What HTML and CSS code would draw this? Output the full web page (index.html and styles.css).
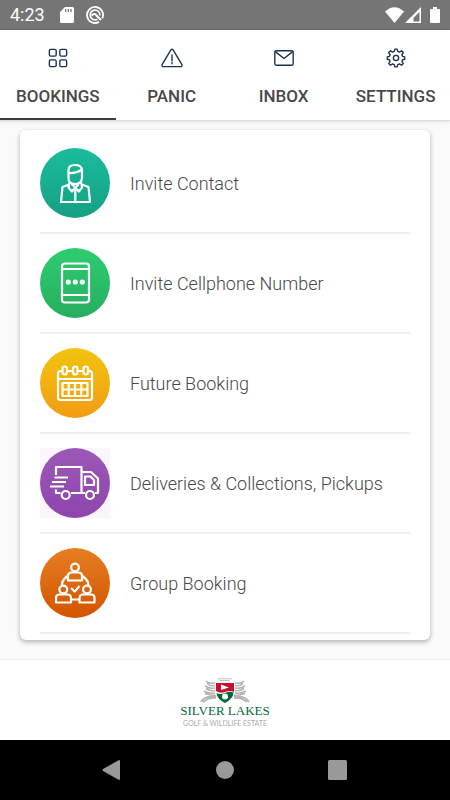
FILE: index.html
```html
<!DOCTYPE html>
<html lang="en">
<head>
    <meta charset="UTF-8">
    <meta name="viewport" content="width=device-width, initial-scale=1.0">
    <title>Silver Lakes Bookings</title>
    <link rel="stylesheet" href="styles.css">
</head>
<body>
    <!-- Device status bar -->
    <div class="status-bar">
        <div class="status-left">
            <span class="status-time">4:23</span>
            <svg width="14" height="16" viewBox="0 0 14 16"><path fill="#fff" fill-rule="evenodd" d="M5 0h7.500q1.500 0 1.500 1.500v13q0 1.500-1.500 1.500h-11Q0 16 0 14.500V5zM5 2v3h1.300V2zm2.700 0v3H9V2zm2.600 0v3h1.300V2z"/></svg>
            <svg width="18" height="18" viewBox="0 0 18 18" fill="none" stroke="#fff"><path stroke-width="1.800" d="M13 15.900A8 8 0 1 1 16.300 12.300"/><path stroke-width="1.600" d="M11.500 13.200A4.900 4.900 0 1 1 13.900 9.500"/><path stroke-width="2" d="M5.500 9.500Q8.500 6.500 10.500 9.500L15 14"/></svg>
        </div>
        <div class="status-right">
            <svg width="19" height="16" viewBox="0 0 19 16"><path fill="#fff" d="M0 4.500Q9.500-4 19 4.500L9.500 16z"/></svg>
            <svg width="16" height="16" viewBox="0 0 16 16"><path fill="#fff" fill-rule="evenodd" d="M16 0v16H0zM14.500 5L8.500 11v3.500h6z"/></svg>
            <svg class="battery-icon" width="10" height="16" viewBox="0 0 10 16"><path fill="#fff" d="M3 0h4v2h2q1 0 1 1v12q0 1-1 1H1q-1 0-1-1V3q0-1 1-1h2z"/></svg>
        </div>
    </div>

    <nav class="tabs">
        <button class="tab active">
            <svg class="tab-icon" viewBox="0 0 22 22"><rect x="1.500" y="1.500" width="7.500" height="7.500" rx="1.500"/><rect x="13" y="1.500" width="7.500" height="7.500" rx="1.500"/><rect x="1.500" y="13" width="7.500" height="7.500" rx="1.500"/><rect x="13" y="13" width="7.500" height="7.500" rx="1.500"/></svg>
            <span>BOOKINGS</span>
        </button>
        <button class="tab">
            <svg class="tab-icon" viewBox="0 0 22 22"><path d="M9.800 2L.2 18Q-.8 20.500 1.800 20.500h18.400q2.600 0 1.600-2.500L12.200 2Q11 .4 9.800 2zM11 7.500V14M11 16v1.300"/></svg>
            <span>PANIC</span>
        </button>
        <button class="tab">
            <svg class="tab-icon" viewBox="0 0 22 22"><rect x=".9" y="3" width="20.200" height="16" rx="1.700"/><path d="M1.500 4l9.500 7.500L20.500 4"/></svg>
            <span>INBOX</span>
        </button>
        <button class="tab">
            <svg class="tab-icon" viewBox="0 0 22 22"><path d="M9.700 1.200h2.600l.6 2.600 1.900.8 2.300-1.500L19 5l-1.500 2.300.8 1.900 2.300.5v2.700l-2.300.5-.8 1.900L19 17.100 17.100 19l-2.300-1.500-1.900.8-.6 2.500H9.700l-.6-2.500-1.900-.8L4.900 19 3 17.100l1.500-2.300-.8-1.900-2.300-.5V9.700l2.300-.5.8-1.900L3 5l1.900-1.900 2.300 1.500 1.900-.8z"/><circle cx="11" cy="11" r="2.900"/></svg>
            <span>SETTINGS</span>
        </button>
    </nav>

    <main class="content">
        <div class="card">
            <a href="#" class="menu-row">
                <span class="menu-icon teal">
                    <svg viewBox="0 0 70 70"><path d="M28.500 24v-2q0-5 6.500-5t7 5v7q0 7-7 7t-6.500-7zM28.500 25q8 .5 13.500-3.500M29 36.500l-6.500 2.500-1.500 15h29l-1.500-15-6.500-2.500M29.500 34.500l-1 5 3.500 4 3.300-4 3.500 4 3.300-4-1-5M35.300 39.500V54M31.500 36l3.800 3.500 3.700-3.500"/></svg>
                </span>
                <span>Invite Contact</span>
            </a>
            <a href="#" class="menu-row">
                <span class="menu-icon green">
                    <svg viewBox="0 0 70 70"><rect x="22" y="15.500" width="27" height="39" rx="3"/><path d="M22 21h27M22 47h27"/><g fill="#fff" stroke="none"><circle cx="28.300" cy="34" r="2.600"/><circle cx="35.300" cy="34" r="2.600"/><circle cx="42.300" cy="34" r="2.600"/></g></svg>
                </span>
                <span>Invite Cellphone Number</span>
            </a>
            <a href="#" class="menu-row">
                <span class="menu-icon yellow">
                    <svg viewBox="0 0 70 70"><path d="M22 23h-1.500q-2.500 0-2.500 2.500v24q0 2.500 2.500 2.500h29q2.500 0 2.500-2.500v-24q0-2.500-2.500-2.500H48M27 23h6M38 23h5M18 31h34"/><rect x="22.500" y="18.500" width="4.500" height="8" rx="2.200"/><rect x="33" y="18.500" width="4.500" height="8" rx="2.200"/><rect x="43.500" y="18.500" width="4.500" height="8" rx="2.200"/><path d="M22.500 35h25v13h-25zM22.500 41.500h25M28.700 35v13M35 35v13M41.300 35v13"/></svg>
                </span>
                <span>Future Booking</span>
            </a>
            <a href="#" class="menu-row">
                <span class="menu-icon-tint">
                    <span class="menu-icon purple">
                        <svg viewBox="0 0 70 70"><path d="M16 27v-8h25.500v26H31M16 41.500V45h4.500M41.500 24H51l7 6.500V45h-3M41.500 45H45M14.500 29.500H28M12 34h14M10 38.500h14M45 28.500h5.500l3.500 3.500v5h-9z"/><circle cx="25.700" cy="47" r="4"/><circle cx="50" cy="47" r="4"/></svg>
                    </span>
                </span>
                <span>Deliveries &amp; Collections, Pickups</span>
            </a>
            <a href="#" class="menu-row">
                <span class="menu-icon orange">
                    <svg viewBox="0 0 70 70"><circle cx="35" cy="19.500" r="3.900"/><path d="M28 32.500V28q0-3.500 3.500-3.500h7Q42 24.500 42 28v4.500z"/><circle cx="23.300" cy="41.500" r="3.900"/><path d="M16 54.500V50q0-3.500 3.500-3.500h8q3.500 0 3.500 3.500v4.500z"/><circle cx="47" cy="41.500" r="3.900"/><path d="M39.500 54.500V50q0-3.500 3.500-3.500h8q3.500 0 3.500 3.500v4.500zM27.500 28Q22 32 22 37M42.500 28q5.500 4 6 9M31 51.500h8.500M31 40l3.700 3.500 4.800-5.500"/></svg>
                </span>
                <span>Group Booking</span>
            </a>
        </div>
    </main>

    <footer class="footer">
        <svg class="crest" width="50" height="26" viewBox="0 0 50 26">
            <g fill="none" stroke="#b4b4b4" stroke-width="1.700">
                <path d="M18 .8h14M20 2.500h10" stroke-width="1" stroke-dasharray="2 .5"/>
                <path id="plume" d="M6 3q3 3 9 2M7 5.500q3 3 8 2M5 8q4 3 10 2M6 10.500q4 3 9 2M4 13q5 3 11 2M5 15.500q5 2 11 2M1 24q4-7 15-5M3 24q6-5 13-4"/>
                <use href="#plume" transform="matrix(-1 0 0 1 50 0)"/>
            </g>
            <path fill="#c8102e" d="M16 5h18v9q-4-2-9 0t-9-1z"/>
            <path fill="#00693c" d="M16.500 15q4 2 8.500 0t8.500-.5Q33 21 25 25q-8-4-8.500-10z"/>
            <path fill="#fff" d="M21 6.500l8 3-8 2.500z"/>
            <circle cx="25" cy="18.500" r="3" fill="#fff"/>
        </svg>
        <div class="logo-name">SILVER LAKES</div>
        <div class="logo-tagline">GOLF &amp; WILDLIFE ESTATE</div>
    </footer>

    <!-- Device navigation -->
    <div class="device-nav">
        <button class="device-button" aria-label="Back"><svg width="20" height="20" viewBox="0 0 20 20"><path d="M17 0q1 0 1 1v18q0 1-1 1L1 11q-1-1 0-2z"/></svg></button>
        <button class="device-button" aria-label="Home"><svg width="20" height="20" viewBox="0 0 20 20"><circle cx="10" cy="10" r="9"/></svg></button>
        <button class="device-button" aria-label="Overview"><svg width="20" height="20" viewBox="0 0 20 20"><rect width="19" height="20" rx="1.500"/></svg></button>
    </div>
</body>
</html>
```
FILE: styles.css
```css
* {
    box-sizing: border-box;
    margin: 0;
    padding: 0;
}

body {
    font-family: Roboto, sans-serif;
    display: flex;
    flex-direction: column;
    min-height: 100vh;
    background-color: #fafafa;
}

svg {
    display: block;
}

button {
    font-family: inherit;
    border: none;
    background: none;
    cursor: pointer;
}

.status-bar {
    display: flex;
    justify-content: space-between;
    align-items: center;
    height: 30px;
    padding: 0 10px;
    background: #757575;
    border-bottom: 1px solid #686868;
    color: white;
}

.status-left {
    display: flex;
    align-items: center;
}

.status-time {
    font-size: 18px;
    margin-right: 15px;
}

.status-left svg + svg {
    margin-left: 12px;
}

.status-right {
    display: flex;
    align-items: center;
    gap: 1px;
}

.battery-icon {
    margin-left: 8px;
}

.tabs {
    display: flex;
    height: 91px;
    background: white;
    overflow: hidden;
    border-bottom: 1px solid #ddd;
    box-shadow: 0 1px 3px rgba(0,0,0,0.1);
}

.tab {
    flex: none;
    min-width: 112px;
    padding: 18px 16px 0;
    display: flex;
    flex-direction: column;
    align-items: center;
    gap: 18px;
    font-size: 17px;
    line-height: 20px;
    font-weight: 500;
    color: #484848;
    border-bottom: 2px solid transparent;
}

.tab.active {
    border-bottom-color: #3c3f3c;
}

.tab-icon {
    width: 20px;
    height: 20px;
    fill: none;
    stroke: #1b3050;
    stroke-width: 1.5;
    stroke-linejoin: round;
    stroke-linecap: round;
    overflow: visible;
}

.content {
    flex: 1;
    padding: 9px 20px 19px;
}

.card {
    background: white;
    border-radius: 6px;
    padding: 4px 20px 6px;
    box-shadow: 0 2px 5px rgba(0,0,0,0.3);
}

.menu-row {
    display: flex;
    align-items: center;
    gap: 20px;
    padding: 14px 0;
    border-bottom: 2px solid #eeeef0;
    color: #484848;
    font-size: 18px;
    font-weight: 300;
    text-decoration: none;
}

.menu-icon {
    display: block;
    flex: none;
    width: 70px;
    height: 70px;
    border-radius: 50%;
}

.menu-icon svg {
    fill: none;
    stroke: white;
    stroke-width: 2.2;
    stroke-linejoin: round;
}

.menu-icon-tint {
    flex: none;
    background: #fbf5fc;
}

.teal {
    background: linear-gradient(#1abc9c, #16a085);
}

.green {
    background: linear-gradient(#2ecc71, #27ae60);
}

.yellow {
    background: linear-gradient(#f1c40f, #f39c12);
}

.purple {
    background: linear-gradient(#9b59b6, #8e44ad);
}

.orange {
    background: linear-gradient(#e67e22, #d35400);
}

.footer {
    display: flex;
    flex-direction: column;
    align-items: center;
    height: 81px;
    padding-top: 18px;
    background: white;
    border-top: 1px solid #eee;
}

.logo-name {
    font-family: "Liberation Serif", serif;
    font-size: 13px;
    line-height: 14px;
    color: #00693c;
}

.logo-tagline {
    font-family: Lato, sans-serif;
    font-size: 7px;
    line-height: 10px;
    color: #aaa;
}

.device-nav {
    display: flex;
    justify-content: center;
    align-items: center;
    gap: 93px;
    height: 60px;
    background: black;
}

.device-button svg {
    fill: #999;
}
```
